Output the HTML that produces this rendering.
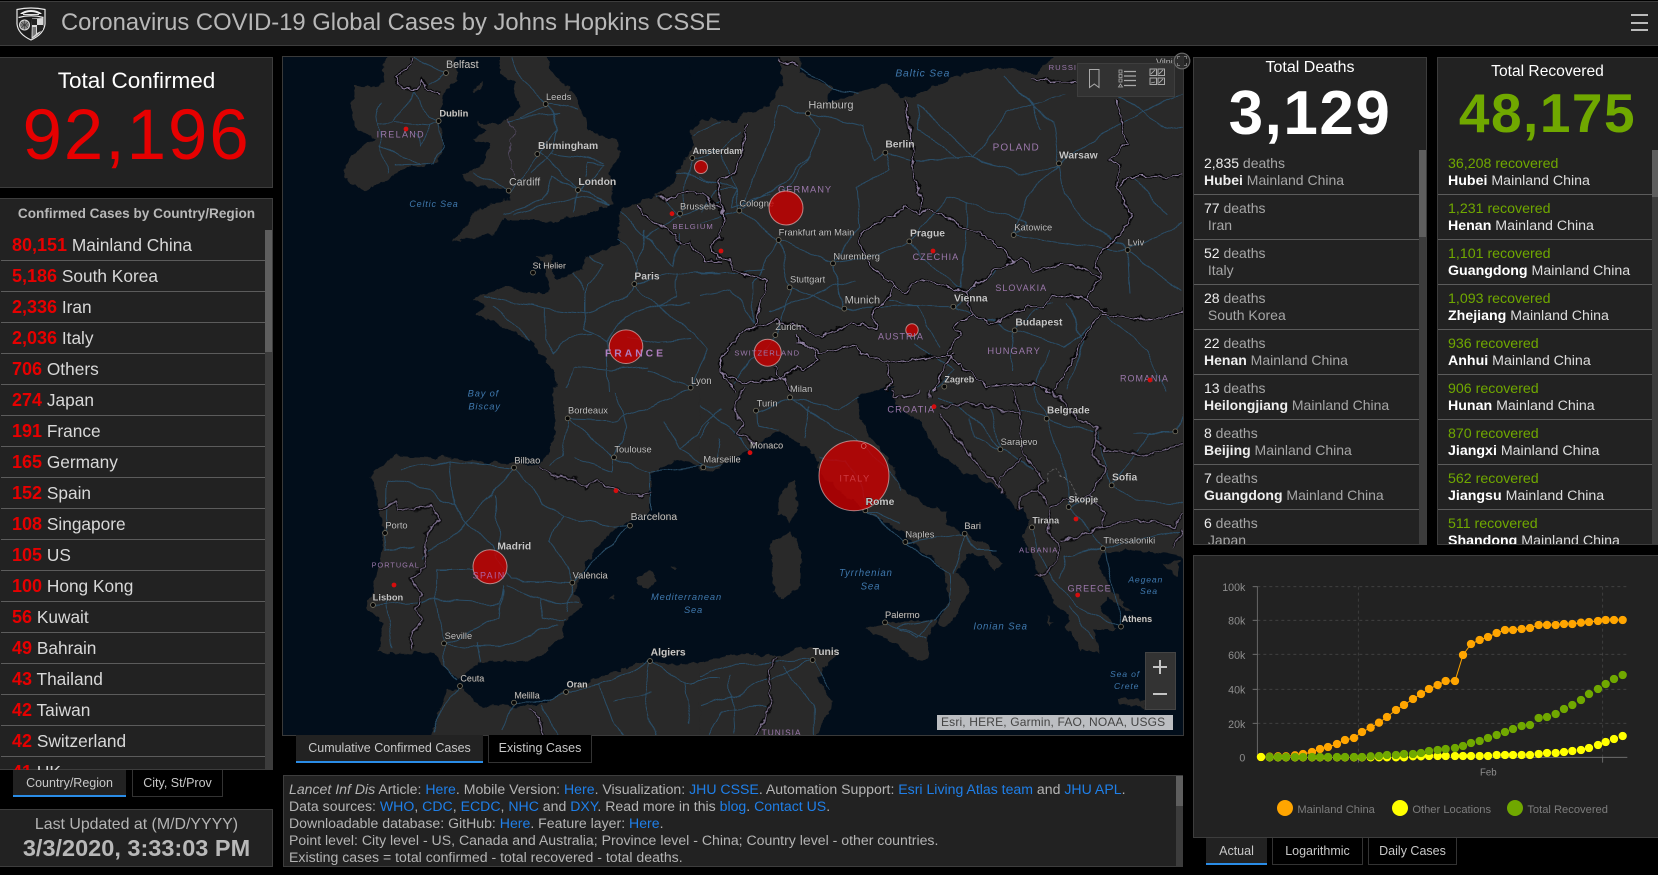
<!DOCTYPE html>
<html><head><meta charset="utf-8"><title>COVID-19</title>
<style>
*{box-sizing:border-box}
html,body{margin:0;padding:0;background:#000;width:1658px;height:875px;overflow:hidden}
body{font-family:"Liberation Sans",sans-serif;position:relative}
.p{position:absolute;background:#222;border:1px solid #3d3d3d}
.a{position:absolute;white-space:nowrap}
.c{text-align:center}
.lst{position:absolute;overflow:hidden}
.r1{height:31px;border-bottom:1px solid #5c5c5c;font-size:17.3px;line-height:30px;padding-left:11px;color:#d8d8d8;white-space:nowrap}
.r1 b{color:#e60000;font-size:18px}
.r2{height:45px;border-bottom:1px solid #5c5c5c;font-size:14px;line-height:17px;padding:5px 0 0 10px;white-space:nowrap;color:#a6a6a6}
.r2 b{color:#eee}
.r2 i{font-style:normal;color:#eee}
.g{color:#ddd;font-size:14.2px;padding-top:6px}.g span{color:#70a800}.g b{color:#fff}
.sb{position:absolute;background:#3c3c3c}
.sb div{background:#5e5e5e;width:100%}
.tab{position:absolute;height:27px;background:#000;border:1px solid #333;border-top:0;color:#c8c8c8;font-size:12.5px;line-height:27px;text-align:center;white-space:nowrap}
.tab.on{background:#222;border:0;border-bottom:2px solid #2a8ce6;line-height:27px}
a{color:#1f7fe8;text-decoration:none}
#txt{left:283px;top:775px;width:900px;height:92px;color:#b4b4b4;font-size:14.1px;line-height:17px;padding:5px 0 0 5px;white-space:nowrap;overflow:hidden}
svg text{font-family:"Liberation Sans",sans-serif}
.ct{fill:#c2c2c2;paint-order:stroke;stroke:#1a1a1a;stroke-width:2px}
.cb{fill:#c6c6c6;font-weight:bold;paint-order:stroke;stroke:#1a1a1a;stroke-width:2px}
.co{fill:#9b78ab;letter-spacing:3px}
.se{fill:#3f78ad;font-style:italic;letter-spacing:2.5px}
.road{fill:none;stroke:#2a4e68;stroke-width:3}
.bk{fill:none;stroke:#060608;stroke-width:10;stroke-linejoin:round}
.bp{fill:none;stroke:#8f80a0;stroke-width:3;stroke-linejoin:round}
.land{fill:#292929}
.sea{fill:#020e1b}
.d1{fill:none;stroke:#767262;stroke-width:17;stroke-linecap:round}
.d2{fill:none;stroke:#060606;stroke-width:12;stroke-linecap:round}
.big{fill:rgba(200,0,0,.82);stroke:rgba(235,190,190,.65);stroke-width:1}
.dot{fill:#d60d0d}
</style></head><body>

<!-- header -->
<div class="p" style="left:-1px;top:1px;width:1660px;height:45px"></div>
<svg class="a" style="left:15px;top:7px" width="32" height="34" viewBox="0 0 32 34">
<path d="M2 2.5 Q16 -0.5 30 2.5 L30 17 Q29 27 16 33 Q3 27 2 17Z" fill="#1d1d1d" stroke="#e8e8e8" stroke-width="1.2"/>
<path d="M5 7 Q9 3 16 3 Q23 3 27 7 L24 7 Q20 5 16 5 Q12 5 8 7Z" fill="#f0f0f0"/>
<path d="M3.5 10.5 Q16 7 28.5 10.5" fill="none" stroke="#eee" stroke-width="1.3"/>
<path d="M8 7.5h16" stroke="#ddd" stroke-width="1"/>
<circle cx="9.5" cy="18" r="5" fill="#888" stroke="#ddd" stroke-width="1"/>
<path d="M5 18h9M9.5 13.5v9M6 15l7 6M13 15l-7 6" stroke="#333" stroke-width=".6"/>
<path d="M17 11.5 L28.5 11 L28.5 17 Q28 26 16.5 32Z" fill="#d8d8d8"/>
<path d="M17 12h5v6h-5zM22 18h6v5l-6 3z" fill="#222"/>
<path d="M17.5 20 L21 20 L21 27 L17.5 30Z" fill="#777"/>
</svg>
<div class="a" id="h1" style="left:61px;top:8px;font-size:23.8px;line-height:30px;color:#b8b8b8">Coronavirus COVID-19 Global Cases by Johns Hopkins CSSE</div>
<div class="a" style="left:1631px;top:14px;width:17px;height:2px;background:#bbb"></div>
<div class="a" style="left:1631px;top:22px;width:17px;height:2px;background:#bbb"></div>
<div class="a" style="left:1631px;top:29px;width:17px;height:2px;background:#bbb"></div>

<!-- total confirmed -->
<div class="p" style="left:-1px;top:57px;width:274px;height:131px"></div>
<div class="a c" style="left:0;width:273px;top:67px;font-size:22.5px;line-height:28px;color:#fff">Total Confirmed</div>
<div class="a c" style="left:0;width:273px;top:96px;font-size:71px;line-height:80px;color:#e60000;letter-spacing:1.8px">92,196</div>

<!-- country list -->
<div class="p" style="left:-1px;top:198px;width:274px;height:572px"></div>
<div class="a c" style="left:0;width:273px;top:205px;font-size:13.6px;line-height:18px;font-weight:bold;color:#b8b8b8">Confirmed Cases by Country/Region</div>
<div class="lst" style="left:1px;top:230px;width:264px;height:540px">
<div class="r1"><b>80,151</b> Mainland China</div>
<div class="r1"><b>5,186</b> South Korea</div>
<div class="r1"><b>2,336</b> Iran</div>
<div class="r1"><b>2,036</b> Italy</div>
<div class="r1"><b>706</b> Others</div>
<div class="r1"><b>274</b> Japan</div>
<div class="r1"><b>191</b> France</div>
<div class="r1"><b>165</b> Germany</div>
<div class="r1"><b>152</b> Spain</div>
<div class="r1"><b>108</b> Singapore</div>
<div class="r1"><b>105</b> US</div>
<div class="r1"><b>100</b> Hong Kong</div>
<div class="r1"><b>56</b> Kuwait</div>
<div class="r1"><b>49</b> Bahrain</div>
<div class="r1"><b>43</b> Thailand</div>
<div class="r1"><b>42</b> Taiwan</div>
<div class="r1"><b>42</b> Switzerland</div>
<div class="r1"><b>41</b> UK</div>
</div>
<div class="sb" style="left:265px;top:230px;width:7px;height:539px"><div style="height:122px"></div></div>
<div class="tab on" style="left:13px;top:770px;width:113px">Country/Region</div>
<div class="tab" style="left:132px;top:770px;width:91px">City, St/Prov</div>

<!-- last updated -->
<div class="p" style="left:-1px;top:809px;width:274px;height:58px"></div>
<div class="a c" style="left:0;width:273px;top:816px;font-size:15.9px;line-height:18px;color:#b4b4b4">Last Updated at (M/D/YYYY)</div>
<div class="a c" style="left:0;width:273px;top:835px;font-size:23.5px;line-height:26px;font-weight:bold;color:#b8b8b8">3/3/2020, 3:33:03 PM</div>

<!-- map -->
<svg class="a" style="left:283px;top:57px;outline:1px solid #3a3a3a;filter:blur(.25px)" width="900" height="678" viewBox="0 0 900 678">
<defs>
<filter id="w" filterUnits="userSpaceOnUse" x="270" y="40" width="930" height="710" color-interpolation-filters="sRGB"><feTurbulence type="fractalNoise" baseFrequency=".1" numOctaves="3" seed="4"/><feDisplacementMap in="SourceGraphic" scale="8" xChannelSelector="R" yChannelSelector="G"/></filter>
<filter id="w2" filterUnits="userSpaceOnUse" x="270" y="40" width="930" height="710" color-interpolation-filters="sRGB"><feTurbulence type="fractalNoise" baseFrequency=".04" numOctaves="2" seed="9"/><feDisplacementMap in="SourceGraphic" scale="10" xChannelSelector="R" yChannelSelector="G"/></filter>
</defs>
<rect width="900" height="678" fill="#020e1b"/>
<g transform="translate(-283,-57)">
<!-- land -->
<g filter="url(#w)">
<g transform="translate(280,50) scale(.33333)">
<path class="land" d="M330,10 L530,10 L530,90 L490,130 L480,210 L490,290 L470,340 L380,350 L340,380 L260,420 L210,405 L190,345 L235,300 L290,265 L230,240 L215,190 L225,105 L290,110 L320,90 L305,60Z"/>
<path class="land" d="M660,10 L800,10 L810,60 L880,130 L905,180 L925,240 L960,260 L1010,270 L1020,310 L985,370 L1000,400 L1000,460 L900,500 L825,515 L730,510 L665,510 L650,550 L560,565 L515,575 L595,480 L650,455 L690,450 L680,420 L610,410 L560,395 L545,375 L610,340 L630,280 L585,270 L620,240 L590,215 L630,225 L680,210 L720,170 L700,100 L660,70Z"/>
<path class="land" d="M580,125 L605,95 L600,120Z"/>
<path class="land" d="M1320,205 L1270,215 L1230,240 L1240,290 L1190,370 L1170,410 L1120,440 L1020,485 L1015,540 L1020,580 L930,620 L910,640 L910,655 L830,690 L815,650 L815,615 L770,620 L795,640 L800,680 L810,725 L740,730 L680,710 L600,730 L580,750 L620,770 L590,790 L690,840 L750,870 L820,960 L830,1030 L1320,1030Z"/>
</g>
<g transform="translate(700,50) scale(.33333)">
<rect class="land" x="0" y="0" width="1500" height="1020"/>
<path class="sea" d="M-40,-10 L232,-10 L250,80 L210,170 L130,190 L110,215 L60,212 L-10,205Z"/>
<path class="sea" d="M298,-10 L1095,-10 L1010,70 L900,50 L760,80 L640,140 L600,140 L560,100 L470,130 L380,160 L400,110 L300,70Z"/>
<path class="sea" d="M530,1021 L600,1021 L570,1012Z"/>
</g>
<g transform="translate(280,390) scale(.33333)">
<path class="land" d="M270,255 L340,200 L500,205 L640,220 L780,225 L810,180 L825,100 L820,-3 L1320,-3 L1320,235 L1250,220 L1190,210 L1110,250 L1110,360 L1000,420 L950,470 L910,540 L880,610 L915,640 L850,700 L850,740 L760,810 L600,815 L530,870 L490,830 L460,790 L340,790 L295,785 L310,700 L255,650 L275,610 L310,470 L305,380 L285,320Z"/>
<path class="land" d="M445,1060 L500,900 L545,895 L600,945 L700,950 L800,940 L860,900 L960,860 L1090,820 L1240,825 L1320,810 L1320,1060Z"/>
<path class="land" d="M1065,565 L1110,540 L1135,570 L1105,595Z M985,625 L1010,615 L1005,630Z M1165,530 L1195,535 L1190,545Z"/>
</g>
<g transform="translate(700,390) scale(.33333)">
<path class="land" d="M-1,-3 L540,-3 L475,20 L480,90 L510,140 L560,200 L600,290 L690,350 L745,365 L730,400 L790,430 L860,465 L905,520 L885,548 L850,495 L800,490 L770,550 L810,590 L800,620 L740,710 L710,700 L750,630 L730,540 L650,470 L610,430 L510,370 L440,320 L360,250 L350,190 L240,125 L180,160 L100,205 L40,240 L-1,245Z"/>
<path class="land" d="M575,-3 L600,60 L660,90 L700,170 L780,240 L850,270 L900,300 L950,350 L990,390 L970,440 L1010,540 L1040,590 L1060,640 L1110,680 L1100,710 L1140,780 L1200,790 L1180,720 L1255,720 L1200,650 L1220,620 L1300,670 L1270,640 L1230,590 L1190,520 L1210,490 L1280,480 L1390,490 L1500,510 L1500,-3Z"/>
<path class="land" d="M495,710 L550,700 L710,690 L680,750 L685,800 L650,815 L590,760 L520,735Z"/>
<path class="land" d="M235,310 L285,265 L295,350 L270,400 L235,370Z"/>
<path class="land" d="M205,460 L270,425 L305,490 L300,590 L245,625 L220,610 L220,530Z"/>
<path class="land" d="M-1,820 L100,790 L240,795 L320,770 L410,790 L350,860 L400,940 L340,1060 L-1,1060Z"/>
<path class="land" d="M1250,925 L1330,930 L1340,955 L1260,940Z M1040,680 L1060,700 L1050,710Z M1390,520 L1440,510 L1430,560Z"/>
</g>
</g>

<!-- roads -->
<g filter="url(#w2)">
<g transform="translate(280,50) scale(.33333)"><path class="road" d="M300,160 L290,180 L305,290 L320,370 M405,135 L340,215 L295,220 M345,215 L450,225 L477,213 L490,290 L460,340 L340,345 M300,285 L370,320 L415,340 M405,135 L450,200 L477,213 M450,225 L420,290 L400,250 M498,69 L450,110 M498,69 L400,25 M700,22 L725,90 L800,160 L830,240 L775,310 M800,160 L890,175 M720,200 L800,170 M680,215 L740,200 L830,190 M775,310 L810,340 L895,420 M775,310 L750,360 L690,420 L580,370 M895,420 L980,345 L920,340 L910,380 M895,420 L815,380 L790,450 L670,490 M895,420 L990,460 L900,440 L700,490 M880,490 L890,420 M810,310 L890,320 L980,340 M830,240 L820,300 L760,370 M1015,570 L1063,600 L1063,702 L1045,740 L920,790 L790,775 L620,740 M1063,702 L1130,765 L1230,760 M1063,702 L1190,670 L1320,670 M1100,540 L1090,600 L1063,640 M1020,480 L1100,560 L1180,650 M920,620 L975,650 L915,700 L915,790 L920,840 L980,870 L1040,800 M880,670 L910,725 M790,775 L790,860 L820,910 L870,860 L940,855 M640,770 L750,870 M1040,800 L1130,765 L1190,740 L1190,670 M1130,765 L1240,850 L1280,900 L1232,1013 M1040,860 L1130,880 L1235,870 M980,870 L990,1020 M1100,960 L1232,1013 M860,1020 L880,950 L1000,960 L1100,950 M1200,500 L1130,440 M1200,491 L1237,324 L1320,300 M1190,370 L1320,400 M1200,491 L1320,450 M1200,491 L1100,560 M1237,260 L1320,220 M1200,550 L1180,650"/></g>
<g transform="translate(700,50) scale(.33333)"><path class="road" d="M324,190 L240,170 L210,270 L118,482 M324,190 L360,240 L330,320 L250,420 M324,190 L490,230 L520,330 L556,308 L640,330 L820,325 L980,375 L1077,340 M556,308 L570,350 L470,420 L480,530 M118,482 L240,400 L330,320 M118,482 L236,570 L399,640 L433,776 M236,570 L269,712 L226,855 M236,570 L160,700 L160,820 M269,712 L433,776 L600,770 L760,770 M399,640 L520,620 L628,574 L740,440 L800,460 L980,520 L941,555 M628,574 L690,640 L780,720 M1077,340 L1090,430 L1170,520 L1283,600 M1077,340 L980,440 L941,555 M1077,340 L1230,235 M1077,340 L1060,220 L910,80 L1000,160 L1030,240 M820,325 L650,160 M820,325 L920,190 L1090,130 M941,555 L1180,590 L1283,600 L1447,520 M1283,600 L1390,680 L1447,720 M1283,600 L1290,730 M760,770 L830,710 L890,660 M944,841 L760,770 M944,841 L1000,780 L1060,760 M944,841 L930,960 M944,841 L1100,890 L1200,800 M0,380 L110,420 L118,482 M0,670 L190,660 M0,520 L118,482 M0,740 L100,720 L160,820 M300,60 L400,120 L480,130 M650,160 L660,240 L780,330 M1230,235 L1447,130 M1260,140 L1400,230 L1447,240 M1300,380 L1400,500 M800,460 L800,530 L780,720 M480,530 L400,640 M560,750 L650,770 L720,900 M470,690 L330,740 L210,780 M1100,760 L1150,870 L1100,1020 M1220,800 L1340,900 L1400,1020 M1000,1020 L1050,900 M110,420 L100,470 L210,430 M220,860 L100,1000 M60,300 L110,420 L40,420 L0,480 M120,240 L60,300 L0,300 M640,880 L760,960 L700,1020"/></g>
<g transform="translate(280,390) scale(.33333)"><path class="road" d="M360,235 L505,210 L700,233 M505,210 L520,345 L560,395 L640,320 L702,233 M320,270 L315,429 L320,480 L400,470 M320,270 L450,300 L520,350 M560,395 L515,440 L440,490 L435,510 M560,395 L640,480 M648,320 L655,440 L650,490 M702,233 L790,340 L850,380 L1000,410 L1050,407 M850,380 L810,450 L880,578 M640,480 L700,570 L880,578 M470,540 L580,540 M470,540 L470,640 L490,760 M280,645 L470,630 L660,640 L670,590 M670,600 L660,680 L580,720 L490,760 L590,770 L660,770 L760,740 L830,700 M880,578 L950,500 L1050,407 M880,578 L860,660 M680,590 L780,630 L900,640 M780,630 L790,690 L850,680 M490,760 L490,830 L530,870 M600,815 L590,760 M320,630 L340,770 M865,85 L845,200 L810,230 M863,85 L1002,202 L1000,240 L880,200 M1002,202 L1110,245 L1270,230 L1320,230 M1002,202 L1040,110 L1010,0 M1110,245 L1110,360 M1200,180 L1320,60 M863,85 L1010,90 L1230,0 M1150,90 L1200,180 L1280,230 M1320,150 L1310,210 M460,1030 L510,920 L540,888 M670,1020 L702,938 L790,940 L858,906 L960,890 L1110,813 L1200,870 L1320,870 M790,950 L830,1035 M960,890 L1000,1000 L1040,1035 M1110,813 L1090,910 L1120,1035 M1210,870 L1230,1000 M1000,930 L1110,910"/></g>
<g transform="translate(700,390) scale(.33333)"><path class="road" d="M168,62 L270,22 L400,110 M168,62 L170,110 L240,125 M330,50 L310,140 M270,22 L420,60 L480,20 M400,110 L470,150 L590,270 L600,300 M360,200 L440,210 L490,300 L500,360 M0,50 L100,120 L150,185 M30,100 L0,140 M496,361 L616,456 L700,520 L750,550 L750,630 L710,690 M616,456 L794,431 L830,480 L890,480 M794,431 L760,550 M496,361 L600,400 M555,697 L680,750 M590,710 L705,690 M600,720 L650,745 L705,690 M720,20 L850,110 L901,178 L1000,240 M1040,86 L1190,130 L1235,286 M1040,86 L950,50 M1040,86 L1100,250 L1106,351 L1210,470 L1263,710 M1235,286 L1310,330 L1447,340 M1235,286 L1350,125 L1426,124 L1447,60 M1426,124 L1300,130 M996,412 L1010,480 L1060,570 L1130,650 L1263,710 M1209,475 L1100,500 L1080,570 M1209,475 L1447,420 M1000,0 L1040,86 M810,90 L820,140 L901,178 M900,170 L870,60 M1170,320 L1100,350 M1100,650 L1130,680 L1180,750 M0,860 L100,820 L338,810 L390,900 M0,950 L100,920 L210,860 M210,870 L338,810 M90,850 L100,1035 M250,830 L340,940 L340,1035 M20,1035 L60,960 L210,950"/></g>
</g>

<!-- borders -->
<defs>
<path id="b1" d="M400,25 L385,50 L345,85 L370,115 L410,120 L425,90 L450,125 L480,130 M1075,465 L1090,495 L1130,525 L1185,550 L1195,580 L1230,575 L1240,600 L1290,635 L1325,635 M1130,440 L1160,450 L1220,425 L1270,435 L1325,480 M1325,560 L1295,590 L1310,630"/>
<path id="b2" d="M135,225 L130,290 L100,375 L50,390 L70,500 L60,560 L30,590 L50,620 L90,630 L100,665 L200,690 L165,830 L120,850 L60,930 L60,970 L110,1025 M235,30 L290,45 M615,150 L630,240 L640,330 L640,380 L665,440 L660,490 L620,470 L490,545 L475,570 L505,640 L585,710 L610,730 L665,690 L780,720 L800,725 L900,650 L935,630 L900,590 L850,555 L790,535 L755,510 L680,475 L660,490 M585,710 L560,750 L515,780 L530,840 L470,820 L350,860 L300,830 L230,810 L160,835 M800,725 L815,790 L765,830 L780,850 L740,915 L580,940 L480,910 L470,885 L360,910 L345,890 L300,880 L290,850 M290,880 L345,895 L355,930 L310,960 L290,950 L240,985 L220,950 M60,970 L130,1000 L250,985 L270,1025 M815,790 L870,820 L930,800 L980,770 L1030,770 L1060,735 L1150,745 L1200,780 L1220,785 M935,630 L970,625 L1000,665 L1090,640 L1140,655 L1205,685 L1185,630 L1285,525 L1290,490 L1250,410 L1260,340 L1225,330 L1280,280 L1250,145 M995,88 L1130,100 M1258,405 L1290,380 L1450,378 M1205,685 L1155,745 M1200,790 L1130,900 L1090,980 L1060,1025 M1205,790 L1340,810 L1450,790 L1450,770 M740,915 L860,1010 L1000,1000 L1060,1025 M560,945 L580,1000 L550,1025 M700,1025 L730,960 L760,910"/>
<path id="b3" d="M295,360 L345,335 L350,360 L410,355 L455,350 L480,390 L435,435 L435,530 L390,565 L425,615 L405,660 L430,690 L390,740 L398,780 M780,228 L810,255 L880,270 L920,290 L950,272 L1000,295 L1040,310 L1080,320 L1120,310 M748,955 L780,990 L790,1040"/>
<path id="b4" d="M130,-5 L100,60 L130,100 L110,130 L170,160 M575,0 L580,20 L640,20 L660,0 M690,0 L690,25 M720,50 L770,45 L800,40 L960,70 L940,0 M720,70 L760,130 L830,220 L900,290 M960,70 L970,190 L1030,270 L1010,300 L1045,340 M965,205 L900,260 L905,310 M1060,0 L1130,90 L1195,110 L1180,190 L1215,240 L1170,320 M1190,150 L1210,180 L1350,195 L1450,160 M960,360 L960,320 L1010,300 M1050,350 L1100,330 L1170,320 L1215,370 L1210,410 M1010,560 L1060,530 L1080,470 L1045,430 L1050,360 M1080,455 L1130,440 L1210,410 L1330,390 L1420,410 L1450,370 M1420,470 L1450,420 M235,800 L205,840 L215,940 L165,1040"/>
</defs>
<g filter="url(#w)">
<g transform="translate(280,50) scale(.33333)"><use href="#b1" class="bk"/><use href="#b1" class="bp"/><path d="M680,210 L710,250 L690,270 L690,320 L700,380" fill="none" stroke="#5f5370" stroke-width="2"/></g>
<g transform="translate(700,50) scale(.33333)"><use href="#b2" class="bk"/><use href="#b2" class="bp"/></g>
<g transform="translate(280,390) scale(.33333)"><use href="#b3" class="bk"/><use href="#b3" class="bp"/></g>
<g transform="translate(700,390) scale(.33333)"><use href="#b4" class="bk"/><use href="#b4" class="bp"/><path d="M1040,270 L1060,235 L1130,300 L1120,320" fill="none" stroke="#888" stroke-width="2" stroke-dasharray="8 6"/></g>
</g>

<!-- city dots -->
<g transform="translate(280,50) scale(.33333)"><path class="d1" d="M498,69h0M797,162h0M476,213h0M772,312h0M686,422h0M894,420h0M1200,491h0M1237,324h0M1063,702h0M759,668h0M1232,1013h0"/><path class="d2" d="M498,69h0M797,162h0M476,213h0M772,312h0M686,422h0M894,420h0M1200,491h0M1237,324h0M1063,702h0M759,668h0M1232,1013h0"/></g>
<g transform="translate(700,50) scale(.33333)"><path class="d1" d="M324,190h0M556,308h0M1077,340h0M118,482h0M236,570h0M628,574h0M941,555h0M1283,600h0M399,640h0M269,712h0M433,776h0M760,770h0M226,855h0M944,841h0M733,1010h0"/><path class="d2" d="M324,190h0M556,308h0M1077,340h0M118,482h0M236,570h0M628,574h0M941,555h0M1283,600h0M399,640h0M269,712h0M433,776h0M760,770h0M226,855h0M944,841h0M733,1010h0"/></g>
<g transform="translate(280,390) scale(.33333)"><path class="d1" d="M863,85h0M1002,202h0M702,233h0M1050,407h0M315,429h0M877,578h0M279,645h0M492,760h0M1110,813h0M540,888h0M702,938h0M858,906h0"/><path class="d2" d="M863,85h0M1002,202h0M702,233h0M1050,407h0M315,429h0M877,578h0M279,645h0M492,760h0M1110,813h0M540,888h0M702,938h0M858,906h0"/></g>
<g transform="translate(700,390) scale(.33333)"><path class="d1" d="M168,62h0M270,22h0M10,232h0M496,361h0M616,456h0M794,431h0M555,697h0M338,810h0M1040,86h0M901,178h0M1235,286h0M1106,351h0M996,412h0M1209,475h0M1263,710h0M1426,124h0"/><path class="d2" d="M168,62h0M270,22h0M10,232h0M496,361h0M616,456h0M794,431h0M555,697h0M338,810h0M1040,86h0M901,178h0M1235,286h0M1106,351h0M996,412h0M1209,475h0M1263,710h0M1426,124h0"/></g>

<!-- labels -->
<g transform="translate(280,50) scale(.33333)">
<text class="ct" x="498" y="54" font-size="32">Belfast</text><text class="ct" x="798" y="150" font-size="28">Leeds</text><text class="cb" x="478" y="200" font-size="28">Dublin</text><text class="cb" x="774" y="297" font-size="31">Birmingham</text><text class="ct" x="687" y="407" font-size="32">Cardiff</text><text class="cb" x="895" y="405" font-size="31">London</text><text class="ct" x="1200" y="478" font-size="28">Brussels</text><text class="cb" x="1238" y="312" font-size="27">Amsterdam</text><text class="cb" x="1063" y="688" font-size="31">Paris</text><text class="ct" x="758" y="656" font-size="26">St Helier</text><text class="ct" x="1233" y="1002" font-size="29">Lyon</text>
<text class="co" x="290" y="263" font-size="27" style="letter-spacing:4px">IRELAND</text><text class="co" x="1177" y="537" font-size="23">BELGIUM</text><text class="se" x="388" y="471" font-size="27">Celtic Sea</text>
</g>
<g transform="translate(700,50) scale(.33333)">
<text class="ct" x="325" y="176" font-size="33">Hamburg</text><text class="cb" x="556" y="292" font-size="31">Berlin</text><text class="cb" x="1077" y="325" font-size="31">Warsaw</text><text class="ct" x="118" y="470" font-size="28">Cologne</text><text class="ct" x="236" y="557" font-size="28">Frankfurt am Main</text><text class="cb" x="630" y="559" font-size="31">Prague</text><text class="ct" x="943" y="542" font-size="28">Katowice</text><text class="ct" x="1283" y="586" font-size="28">Lviv</text><text class="ct" x="400" y="628" font-size="28">Nuremberg</text><text class="ct" x="270" y="698" font-size="28">Stuttgart</text><text class="ct" x="434" y="760" font-size="33">Munich</text><text class="cb" x="762" y="754" font-size="31">Vienna</text><text class="ct" x="226" y="840" font-size="28">Zurich</text><text class="cb" x="946" y="826" font-size="31">Budapest</text><text class="cb" x="733" y="997" font-size="27">Zagreb</text><text class="ct" x="270" y="1026" font-size="28">Milan</text><text class="ct" x="1368" y="45" font-size="27">Vilni</text>
<text class="se" x="586" y="80" font-size="31">Baltic Sea</text>
<text class="co" x="878" y="302" font-size="30">POLAND</text><text class="co" x="234" y="427" font-size="28">GERMANY</text><text class="co" x="638" y="630" font-size="27">CZECHIA</text><text class="co" x="886" y="723" font-size="27">SLOVAKIA</text><text class="co" x="862" y="912" font-size="28">HUNGARY</text><text class="co" x="1260" y="995" font-size="27">ROMANIA</text><text class="co" x="1046" y="60" font-size="23">RUSSIA</text>
</g>
<g transform="translate(280,390) scale(.33333)">
<text class="se" x="563" y="20" font-size="28">Bay of</text><text class="se" x="565" y="58" font-size="28">Biscay</text><text class="ct" x="864" y="70" font-size="28">Bordeaux</text><text class="ct" x="1003" y="187" font-size="28">Toulouse</text><text class="ct" x="703" y="220" font-size="28">Bilbao</text><text class="ct" x="1052" y="390" font-size="31">Barcelona</text><text class="ct" x="316" y="415" font-size="28">Porto</text><text class="co" x="275" y="532" font-size="22">PORTUGAL</text><text class="cb" x="652" y="478" font-size="31">Madrid</text><text class="ct" x="878" y="565" font-size="28">València</text><text class="cb" x="278" y="631" font-size="28">Lisbon</text><text class="ct" x="494" y="747" font-size="28">Seville</text><text class="cb" x="1112" y="797" font-size="31">Algiers</text><text class="ct" x="541" y="875" font-size="27">Ceuta</text><text class="ct" x="703" y="925" font-size="27">Melilla</text><text class="cb" x="860" y="892" font-size="27">Oran</text><text class="se" x="1113" y="630" font-size="28">Mediterranean</text><text class="se" x="1212" y="669" font-size="28">Sea</text>
</g>
<g transform="translate(700,390) scale(.33333)">
<text class="ct" x="170" y="49" font-size="28">Turin</text><text class="ct" x="150" y="176" font-size="28">Monaco</text><text class="ct" x="10" y="217" font-size="28">Marseille</text><text class="ct" x="616" y="443" font-size="28">Naples</text><text class="ct" x="793" y="417" font-size="28">Bari</text><text class="ct" x="555" y="684" font-size="28">Palermo</text><text class="cb" x="338" y="795" font-size="31">Tunis</text><text class="cb" x="1041" y="71" font-size="30">Belgrade</text><text class="ct" x="902" y="165" font-size="28">Sarajevo</text><text class="cb" x="1236" y="271" font-size="31">Sofia</text><text class="cb" x="1106" y="338" font-size="27">Skopje</text><text class="cb" x="997" y="400" font-size="27">Tirana</text><text class="ct" x="1210" y="461" font-size="28">Thessaloniki</text><text class="cb" x="1265" y="696" font-size="27">Athens</text>
<text class="co" x="562" y="68" font-size="28">CROATIA</text><text class="co" x="957" y="488" font-size="23">ALBANIA</text><text class="co" x="1103" y="605" font-size="27">GREECE</text><text class="co" x="185" y="1037" font-size="25">TUNISIA</text>
<text class="se" x="417" y="558" font-size="29">Tyrrhenian</text><text class="se" x="482" y="598" font-size="29">Sea</text><text class="se" x="820" y="718" font-size="29">Ionian Sea</text><text class="se" x="1285" y="577" font-size="26">Aegean</text><text class="se" x="1320" y="612" font-size="26">Sea</text><text class="se" x="1230" y="861" font-size="26">Sea of</text><text class="se" x="1242" y="897" font-size="26">Crete</text>
</g>

<!-- case circles -->
<circle class="big" cx="626" cy="346.7" r="16.8"/>
<circle class="big" cx="854" cy="475.7" r="35"/>
<circle class="big" cx="786" cy="208" r="17"/>
<circle class="big" cx="767.7" cy="352.7" r="13.5"/>
<circle class="big" cx="490" cy="566.7" r="17"/>
<circle class="big" cx="701" cy="167" r="6.5"/>
<circle class="big" cx="912" cy="330" r="6.2"/>
<circle class="dot" cx="406" cy="129" r="2.4"/><circle class="dot" cx="672" cy="213.7" r="2.4"/><circle class="dot" cx="721" cy="251" r="2.4"/><circle class="dot" cx="933" cy="251" r="2.4"/><circle class="dot" cx="1150" cy="380" r="2.4"/><circle class="dot" cx="934" cy="406.7" r="2.4"/><circle class="dot" cx="750" cy="452.7" r="2.4"/><circle class="dot" cx="616" cy="490.7" r="2.4"/><circle class="dot" cx="394" cy="585" r="2.4"/><circle class="dot" cx="1076" cy="519" r="2.4"/><circle class="dot" cx="1077.7" cy="595" r="2.4"/><circle cx="863.7" cy="446" r="2.4" fill="#a00" stroke="#d88" stroke-width=".6"/>
<g transform="translate(280,50) scale(.33333)"><text x="975" y="920" font-size="31" font-weight="bold" fill="#b07fc0" style="letter-spacing:9px">FRANCE</text></g>
<g transform="translate(700,50) scale(.33333)"><text class="co" x="103" y="916" font-size="23">SWITZERLAND</text><text class="co" x="534" y="868" font-size="27">AUSTRIA</text></g>
<g transform="translate(280,390) scale(.33333)"><text x="578" y="565" font-size="27" fill="#b060a0" style="letter-spacing:4px">SPAIN</text></g>
<g transform="translate(700,390) scale(.33333)"><text class="cb" x="497" y="345" font-size="31">Rome</text><text x="418" y="275" font-size="28" fill="#cf3a42" style="letter-spacing:4px">ITALY</text></g>
</g>
</svg>

<!-- toolbar -->
<div class="a" style="left:1077px;top:63px;width:98px;height:34px;background:#323232;border:1px solid #3e3e3e"></div>
<svg class="a" style="left:1077px;top:63px" width="98" height="34" fill="none" stroke="#aaa" stroke-width="1">
<path d="M12.5 6.5h9.5v18l-4.7-3.5-4.8 3.5z"/>
<path d="M47 8.5h12M47 13h12M47 17.5h12M47 22.5h12" stroke-width="1.2"/>
<path d="M42 7h3v3h-3zM42 11.5h3v3h-3zM42 16h3v3h-3zM41.5 24l2-3 2 3z" stroke-width=".8"/>
<path d="M73 6h6.5v6.5h-6.5zM81 6h6.5v6.5h-6.5zM73 15h6.5v6.5h-6.5zM81 15h6.5v6.5h-6.5z"/>
<path d="M74 11l4-4M82 11l4-4M74 20l4-1M82 20l4-4" stroke-width=".9"/>
</svg>
<svg class="a" style="left:1173px;top:52px" width="18" height="18" fill="none">
<circle cx="9" cy="9" r="7.8" fill="#2f2f2f" fill-opacity=".75" stroke="#6a6a6a" stroke-width="1.2"/>
<path d="M4.5 7V4.5H7M11 4.5h2.5V7M13.5 11v2.5H11M7 13.5H4.5V11" stroke="#777" stroke-width="1"/>
</svg>

<!-- zoom -->
<div class="a" style="left:1145px;top:652px;width:31px;height:58px;background:#333;border:1px solid #444"></div>
<div class="a" style="left:1153px;top:666px;width:14px;height:2px;background:#c4c4c4"></div>
<div class="a" style="left:1159px;top:660px;width:2px;height:14px;background:#c4c4c4"></div>
<div class="a" style="left:1153px;top:693px;width:14px;height:2px;background:#c4c4c4"></div>
<!-- attribution -->
<div class="a" style="left:937px;top:715px;width:236px;height:15px;background:#bcbec2;color:#444;font-size:12px;line-height:15px;padding-left:4px;letter-spacing:.16px">Esri, HERE, Garmin, FAO, NOAA, USGS</div>

<div class="tab on" style="left:296px;top:735px;width:187px;height:28px">Cumulative Confirmed Cases</div>
<div class="tab" style="left:488px;top:735px;width:104px;height:28px">Existing Cases</div>

<!-- text -->
<div class="p" id="txt"><i>Lancet Inf Dis</i> Article: <a>Here</a>. Mobile Version: <a>Here</a>. Visualization: <a>JHU CSSE</a>. Automation Support: <a>Esri Living Atlas team</a> and <a>JHU APL</a>.<br>Data sources: <a>WHO</a>, <a>CDC</a>, <a>ECDC</a>, <a>NHC</a> and <a>DXY</a>. Read more in this <a>blog</a>. <a>Contact US</a>.<br>Downloadable database: GitHub: <a>Here</a>. Feature layer: <a>Here</a>.<br>Point level: City level - US, Canada and Australia; Province level - China; Country level - other countries.<br>Existing cases = total confirmed - total recovered - total deaths.</div>
<div class="sb" style="left:1176px;top:776px;width:7px;height:90px"><div style="height:30px"></div></div>

<!-- deaths -->
<div class="p" style="left:1193px;top:57px;width:234px;height:488px"></div>
<div class="a c" style="left:1193px;width:234px;top:58px;font-size:16px;line-height:20px;color:#fff">Total Deaths</div>
<div class="a c" style="left:1193px;width:234px;top:79px;font-size:62px;line-height:70px;font-weight:bold;color:#fff;letter-spacing:1.5px">3,129</div>
<div class="lst" style="left:1194px;top:150px;width:225px;height:394px">
<div class="r2"><i>2,835</i> deaths<br><b>Hubei</b> Mainland China</div>
<div class="r2"><i>77</i> deaths<br>&nbsp;Iran</div>
<div class="r2"><i>52</i> deaths<br>&nbsp;Italy</div>
<div class="r2"><i>28</i> deaths<br>&nbsp;South Korea</div>
<div class="r2"><i>22</i> deaths<br><b>Henan</b> Mainland China</div>
<div class="r2"><i>13</i> deaths<br><b>Heilongjiang</b> Mainland China</div>
<div class="r2"><i>8</i> deaths<br><b>Beijing</b> Mainland China</div>
<div class="r2"><i>7</i> deaths<br><b>Guangdong</b> Mainland China</div>
<div class="r2"><i>6</i> deaths<br>&nbsp;Japan</div>
</div>
<div class="sb" style="left:1419px;top:150px;width:7px;height:394px"><div style="height:87px"></div></div>

<!-- recovered -->
<div class="p" style="left:1437px;top:57px;width:222px;height:488px"></div>
<div class="a c" style="left:1437px;width:221px;top:62px;font-size:15.6px;line-height:20px;color:#fff">Total Recovered</div>
<div class="a c" style="left:1437px;width:221px;top:78px;font-size:55px;line-height:70px;font-weight:bold;color:#70a800;letter-spacing:1.5px">48,175</div>
<div class="lst" style="left:1438px;top:150px;width:214px;height:394px">
<div class="r2 g"><span>36,208 recovered</span><br><b>Hubei</b> Mainland China</div>
<div class="r2 g"><span>1,231 recovered</span><br><b>Henan</b> Mainland China</div>
<div class="r2 g"><span>1,101 recovered</span><br><b>Guangdong</b> Mainland China</div>
<div class="r2 g"><span>1,093 recovered</span><br><b>Zhejiang</b> Mainland China</div>
<div class="r2 g"><span>936 recovered</span><br><b>Anhui</b> Mainland China</div>
<div class="r2 g"><span>906 recovered</span><br><b>Hunan</b> Mainland China</div>
<div class="r2 g"><span>870 recovered</span><br><b>Jiangxi</b> Mainland China</div>
<div class="r2 g"><span>562 recovered</span><br><b>Jiangsu</b> Mainland China</div>
<div class="r2 g"><span>511 recovered</span><br><b>Shandong</b> Mainland China</div>
</div>
<div class="sb" style="left:1652px;top:150px;width:6px;height:394px"><div style="height:47px"></div></div>

<!-- chart -->
<div class="p" style="left:1193px;top:555px;width:466px;height:283px"></div>
<svg class="a" style="left:1180px;top:540px" width="478" height="335" viewBox="0 0 1434 1005">
<path d="M232 241H1342M232 343H1342M232 448H1342M232 550H1342M232 140H1342M535 140V652M1268 140V652" stroke="#444" stroke-width="2.4" stroke-dasharray="9 9" fill="none"/>
<path d="M218 140H232V652H1342M218 241H232M218 343H232M218 448H232M218 550H232M535 652V668M1268 652V668" stroke="#777" stroke-width="2.4" fill="none"/>
<g fill="#8e8e8e" font-size="32" text-anchor="end"><text x="196" y="153">100k</text><text x="196" y="254">80k</text><text x="196" y="357">60k</text><text x="196" y="461">40k</text><text x="196" y="564">20k</text><text x="196" y="665">0</text></g>
<text x="925" y="706" font-size="29" fill="#8e8e8e" text-anchor="middle">Feb</text>
<path fill="none" stroke="#ffa500" stroke-width="3" d="M243 651L269 650L294 649L318 649L345 646L369 642L396 636L420 627L444 621L471 612L495 600L522 594L546 576L572 563L597 548L621 531L648 510L672 495L699 477L723 462L747 447L773 435L797 423L825 423L849 345L873 312L899 300L924 291L950 279L975 270L999 270L1025 267L1050 264L1076 255L1101 255L1127 255L1152 252L1177 252L1203 248L1227 246L1254 243L1277 240L1302 240L1328 240"/>
<path fill="none" stroke="#ffa500" stroke-width="25" stroke-linecap="round" d="M243 651h0M269 650h0M294 649h0M318 649h0M345 646h0M369 642h0M396 636h0M420 627h0M444 621h0M471 612h0M495 600h0M522 594h0M546 576h0M572 563h0M597 548h0M621 531h0M648 510h0M672 495h0M699 477h0M723 462h0M747 447h0M773 435h0M797 423h0M825 423h0M849 345h0M873 312h0M899 300h0M924 291h0M950 279h0M975 270h0M999 270h0M1025 267h0M1050 264h0M1076 255h0M1101 255h0M1127 255h0M1152 252h0M1177 252h0M1203 248h0M1227 246h0M1254 243h0M1277 240h0M1302 240h0M1328 240h0"/>
<path fill="none" stroke="#ffff00" stroke-width="25" stroke-linecap="round" d="M243 651h0M269 652h0M294 652h0M318 652h0M345 652h0M369 652h0M396 652h0M420 652h0M444 652h0M471 652h0M495 652h0M522 652h0M546 652h0M572 652h0M597 652h0M621 652h0M648 652h0M672 652h0M699 649h0M723 649h0M747 648h0M773 648h0M797 648h0M825 648h0M849 648h0M873 648h0M899 648h0M924 648h0M950 645h0M975 645h0M999 645h0M1025 645h0M1050 645h0M1076 642h0M1101 639h0M1127 639h0M1152 636h0M1177 633h0M1203 630h0M1227 624h0M1254 615h0M1277 606h0M1302 597h0M1328 588h0"/>
<path fill="none" stroke="#70a800" stroke-width="25" stroke-linecap="round" d="M269 651h0M294 651h0M318 651h0M345 651h0M369 651h0M396 651h0M420 651h0M444 651h0M471 651h0M495 651h0M522 651h0M546 651h0M572 649h0M597 648h0M621 645h0M648 645h0M672 642h0M699 642h0M723 639h0M747 633h0M773 630h0M797 627h0M825 624h0M849 618h0M873 609h0M899 603h0M924 594h0M950 585h0M975 576h0M999 567h0M1025 558h0M1050 555h0M1076 534h0M1101 531h0M1127 522h0M1152 507h0M1177 495h0M1203 480h0M1227 462h0M1254 447h0M1277 432h0M1302 417h0M1328 405h0"/>
<circle cx="315" cy="804" r="24" fill="#ffa500"/><circle cx="660" cy="804" r="24" fill="#ffff00"/><circle cx="1005" cy="804" r="24" fill="#70a800"/>
<g fill="#7d7d7d" font-size="33.5"><text x="352" y="819">Mainland China</text><text x="697" y="819">Other Locations</text><text x="1042" y="819">Total Recovered</text></g>
</svg>
<div class="tab on" style="left:1206px;top:838px;width:61px;height:27px">Actual</div>
<div class="tab" style="left:1272px;top:838px;width:91px;height:27px">Logarithmic</div>
<div class="tab" style="left:1368px;top:838px;width:89px;height:27px">Daily Cases</div>
</body></html>
